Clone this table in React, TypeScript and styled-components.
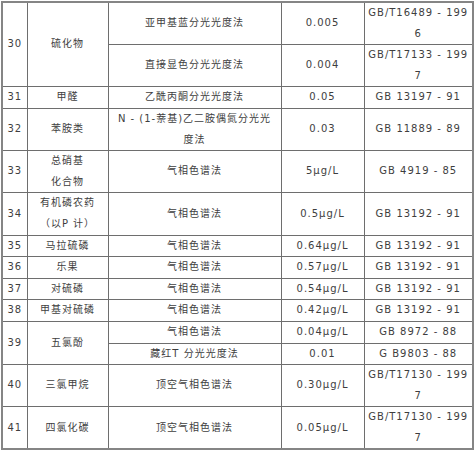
import React from "react";
import styled, { createGlobalStyle } from "styled-components";

const GlobalStyle = createGlobalStyle`
  html, body {
    margin: 0;
    padding: 0;
    background: #ffffff;
  }
`;

type Text = string | string[];

type Row = {
  no?: string;
  name?: Text;
  span?: number;
  method: Text;
  limit: string;
  std: Text;
};

const rows: Row[] = [
  { no: "30", name: "硫化物", span: 2, method: "亚甲基蓝分光光度法", limit: "0.005", std: ["GB/T16489 - 199", "6"] },
  { method: "直接显色分光光度法", limit: "0.004", std: ["GB/T17133 - 199", "7"] },
  { no: "31", name: "甲醛", method: "乙酰丙酮分光光度法", limit: "0.05", std: "GB 13197 - 91" },
  { no: "32", name: "苯胺类", method: ["N - (1-萘基)乙二胺偶氮分光光", "度法"], limit: "0.03", std: "GB 11889 - 89" },
  { no: "33", name: ["总硝基", "化合物"], method: "气相色谱法", limit: "5μg/L", std: "GB 4919 - 85" },
  { no: "34", name: ["有机磷农药", "（以P 计）"], method: "气相色谱法", limit: "0.5μg/L", std: "GB 13192 - 91" },
  { no: "35", name: "马拉硫磷", method: "气相色谱法", limit: "0.64μg/L", std: "GB 13192 - 91" },
  { no: "36", name: "乐果", method: "气相色谱法", limit: "0.57μg/L", std: "GB 13192 - 91" },
  { no: "37", name: "对硫磷", method: "气相色谱法", limit: "0.54μg/L", std: "GB 13192 - 91" },
  { no: "38", name: "甲基对硫磷", method: "气相色谱法", limit: "0.42μg/L", std: "GB 13192 - 91" },
  { no: "39", name: "五氯酚", span: 2, method: "气相色谱法", limit: "0.04μg/L", std: "GB 8972 - 88" },
  { method: "藏红T 分光光度法", limit: "0.01", std: "G B9803 - 88" },
  { no: "40", name: "三氯甲烷", method: "顶空气相色谱法", limit: "0.30μg/L", std: ["GB/T17130 - 199", "7"] },
  { no: "41", name: "四氯化碳", method: "顶空气相色谱法", limit: "0.05μg/L", std: ["GB/T17130 - 199", "7"] },
];

const colWidths = [25, 81, 173, 83, 109];

const Page = styled.div`
  padding: 1px 0 0 1px;
`;

const Table = styled.table`
  width: 471px;
  table-layout: fixed;
  border-collapse: collapse;
  border: 2px solid #858585;
  font-family: "DejaVu Sans", "Noto Sans CJK SC", sans-serif;
  font-size: 10px;
  letter-spacing: 1px;
  color: #3e3e3e;
`;

const Col = styled.col<{ $w: number }>`
  width: ${(p) => p.$w}px;
`;

const Cell = styled.td`
  border: 1px solid #6e6e6e;
  padding: 0 2px;
  line-height: 20.6px;
  text-align: center;
  vertical-align: middle;
  white-space: nowrap;
`;

const lines = (t: Text) =>
  Array.isArray(t)
    ? t.map((l, i) => (
        <React.Fragment key={i}>
          {i > 0 && <br />}
          {l}
        </React.Fragment>
      ))
    : t;

export default function App() {
  return (
    <Page>
      <GlobalStyle />
      <Table>
        <colgroup>
          {colWidths.map((w, i) => (
            <Col key={i} $w={w} />
          ))}
        </colgroup>
        <tbody>
          {rows.map((r, i) => (
            <tr key={i}>
              {r.no && <Cell rowSpan={r.span}>{r.no}</Cell>}
              {r.name && <Cell rowSpan={r.span}>{lines(r.name)}</Cell>}
              <Cell>{lines(r.method)}</Cell>
              <Cell>{r.limit}</Cell>
              <Cell>{lines(r.std)}</Cell>
            </tr>
          ))}
        </tbody>
      </Table>
    </Page>
  );
}
